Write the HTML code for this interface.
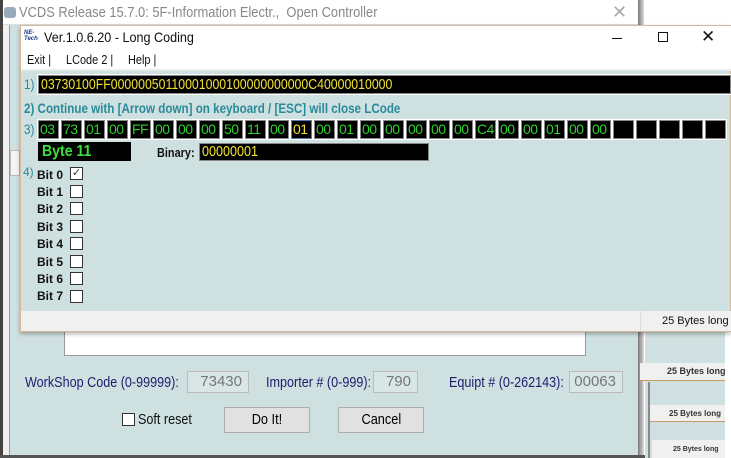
<!DOCTYPE html>
<html><head><style>
*{margin:0;padding:0;box-sizing:border-box}
body{width:731px;height:458px;overflow:hidden;background:#fff;position:relative;font-family:"Liberation Sans",sans-serif}
.a{position:absolute;white-space:nowrap}
.c{transform:scaleX(.84);transform-origin:0 0}
.box{position:absolute;top:120px;width:21px;height:19px;background:#000;border:1px solid #888;outline:1px solid #fff;color:#2ed12e;font-size:14px;line-height:17px;padding-left:1px;letter-spacing:-0.5px}
.bit{position:absolute;left:37px;font-size:12px;font-weight:bold;color:#111}
.cb{position:absolute;left:70px;width:13px;height:13px;border:1px solid #333;background:#fff}
.lbl{color:#1d1d6e;font-size:15px}
.inp{position:absolute;border:1px solid #bbb;background:#d8e6e6;color:#777;font-size:15px;text-align:right;padding-right:6px;line-height:20px;height:22px}
.btn{position:absolute;top:407px;height:26px;background:#e1e1e1;border:1px solid #adadad;font-size:15px;text-align:center;line-height:24px}
.btn span{display:inline-block;transform:scaleX(.85)}
</style></head><body>
<div class="a" style="left:0;top:0;width:3px;height:458px;background:#444"></div>
<div class="a" style="left:3px;top:0;width:635px;height:455px;background:#cfe0e0;border-left:7px solid #f0f0f0"></div>
<div class="a" style="left:9px;top:25px;width:1px;height:430px;background:#999"></div>
<div class="a" style="left:3px;top:0;width:635px;height:25px;background:#fff;border-bottom:1px solid #ddd"></div>
<div class="a" style="left:4px;top:7px;width:12px;height:11px;background:#9ab;border-radius:3px"></div>
<div class="a c" style="left:19px;top:4px;font-size:15px;color:#888;transform:scaleX(.86)">VCDS Release 15.7.0: 5F-Information Electr.,&nbsp; Open Controller</div>
<div class="a" style="left:612px;top:2px;font-size:18px;color:#aaa">✕</div>
<div class="a" style="left:638px;top:0;width:6px;height:458px;background:linear-gradient(90deg,#777,#ddd)"></div>
<div class="a" style="left:0;top:455px;width:645px;height:3px;background:#555"></div>
<div class="a" style="left:10px;top:150px;width:10px;height:26px;background:#f4f4f4;border:1px solid #bbb"></div>
<div class="a" style="left:645px;top:330px;width:86px;height:128px;background:#d0dfdf"></div>
<div class="a" style="left:640px;top:363px;width:85px;height:18px;background:#f0f0f0;border-bottom:1px solid #c96"></div>
<div class="a" style="left:667px;top:366px;font-size:9px;font-weight:bold;color:#333">25 Bytes long</div>
<div class="a" style="left:725px;top:330px;width:6px;height:128px;background:#fff"></div>
<div class="a" style="left:648px;top:382px;width:2px;height:76px;background:#888"></div>
<div class="a" style="left:650px;top:405px;width:75px;height:17px;background:#f0f0f0;border-bottom:1px solid #c96"></div>
<div class="a" style="left:669px;top:409px;font-size:8px;font-weight:bold;color:#333">25 Bytes long</div>
<div class="a" style="left:652px;top:440px;width:73px;height:18px;background:#f0f0f0"></div>
<div class="a" style="left:673px;top:446px;font-size:7px;font-weight:bold;color:#333">25 Bytes long</div>
<div class="a" style="left:64px;top:332px;width:522px;height:24px;background:#fff;border:1px solid #999;border-top:none"></div>
<div class="a lbl c" style="left:25px;top:374px">WorkShop Code (0-99999):</div>
<div class="inp" style="left:187px;top:371px;width:62px">73430</div>
<div class="a lbl c" style="left:266px;top:374px">Importer # (0-999):</div>
<div class="inp" style="left:373px;top:371px;width:45px">790</div>
<div class="a lbl c" style="left:449px;top:374px">Equipt # (0-262143):</div>
<div class="inp" style="left:569px;top:371px;width:54px">00063</div>
<div class="a" style="left:122px;top:413px;width:13px;height:13px;background:#fff;border:1px solid #333"></div>
<div class="a c" style="left:138px;top:411px;font-size:15px;color:#111">Soft reset</div>
<div class="btn" style="left:224px;width:86px"><span>Do It!</span></div>
<div class="btn" style="left:338px;width:86px"><span>Cancel</span></div>
<div class="a" style="left:20px;top:25px;width:711px;height:307px;background:#cfe0e0;border:1px solid #d8b89a;box-shadow:0 2px 4px rgba(0,0,0,.3)"></div>
<div class="a" style="left:21px;top:26px;width:710px;height:44px;background:#fff"></div>
<div class="a" style="left:24px;top:30px;font-size:6px;font-style:italic;font-weight:bold;color:#1a3a8a;line-height:6px">NE-<br>Tech</div>
<div class="a c" style="left:44px;top:29px;font-size:14px;color:#111;transform:scaleX(.9)">Ver.1.0.6.20 - Long Coding</div>
<div class="a" style="left:612px;top:38px;width:10px;height:1px;background:#111"></div>
<div class="a" style="left:658px;top:32px;width:10px;height:10px;border:1px solid #111"></div>
<div class="a" style="left:701px;top:27px;font-size:17px;color:#111">✕</div>
<div class="a c" style="left:27px;top:52px;font-size:13px;color:#111">Exit |</div>
<div class="a c" style="left:66px;top:52px;font-size:13px;color:#111">LCode 2 |</div>
<div class="a c" style="left:128px;top:52px;font-size:13px;color:#111">Help |</div>
<div class="a" style="left:21px;top:69px;width:710px;height:2px;background:#e6eeee"></div>
<div class="a c" style="left:24px;top:76px;font-size:14px;color:#2a8a9a">1)</div>
<div class="a" style="left:38px;top:75px;width:693px;height:19px;background:#000;border:1px solid #888;outline:1px solid #fff"></div>
<div class="a c" style="left:41px;top:76px;font-size:15px;color:#f2e030;transform:scaleX(.82)">03730100FF00000050110001000100000000000C40000010000</div>
<div class="a c" style="left:24px;top:100px;font-size:14px;font-weight:bold;color:#2a8a9a;transform:scaleX(.83)">2) Continue with [Arrow down] on keyboard / [ESC] will close LCode</div>
<div class="a c" style="left:24px;top:121px;font-size:14px;color:#2a8a9a">3)</div>
<div class="box" style="left:38px">03</div><div class="box" style="left:61px">73</div><div class="box" style="left:84px">01</div><div class="box" style="left:107px">00</div><div class="box" style="left:130px">FF</div><div class="box" style="left:153px">00</div><div class="box" style="left:176px">00</div><div class="box" style="left:199px">00</div><div class="box" style="left:222px">50</div><div class="box" style="left:245px">11</div><div class="box" style="left:268px">00</div><div class="box" style="left:291px;color:#f2e030;border-color:#5a7ab0">01</div><div class="box" style="left:314px">00</div><div class="box" style="left:337px">01</div><div class="box" style="left:360px">00</div><div class="box" style="left:383px">00</div><div class="box" style="left:406px">00</div><div class="box" style="left:429px">00</div><div class="box" style="left:452px">00</div><div class="box" style="left:475px">C4</div><div class="box" style="left:498px">00</div><div class="box" style="left:521px">00</div><div class="box" style="left:544px">01</div><div class="box" style="left:567px">00</div><div class="box" style="left:590px">00</div><div class="box" style="left:613px"></div><div class="box" style="left:636px"></div><div class="box" style="left:659px"></div><div class="box" style="left:682px"></div><div class="box" style="left:705px"></div>
<div class="a" style="left:38px;top:142px;width:93px;height:19px;background:#000"></div>
<div class="a c" style="left:42px;top:142px;color:#3ee03e;font-weight:bold;font-size:16px;line-height:19px;transform:scaleX(.88)">Byte 11</div>
<div class="a c" style="left:157px;top:145px;font-size:13px;font-weight:bold;color:#111">Binary:</div>
<div class="a" style="left:199px;top:143px;width:230px;height:18px;background:#000;border:1px solid #888"></div>
<div class="a c" style="left:202px;top:144px;color:#f2e030;font-size:15px;line-height:16px">00000001</div>
<div class="a" style="left:23px;top:165px;font-size:12px;color:#2a8a9a">4)</div>
<div class="bit" style="top:168px">Bit 0</div><div class="cb" style="top:167px;font-size:11px;line-height:10px;color:#333;text-align:center">✓</div>
<div class="bit" style="top:185px">Bit 1</div><div class="cb" style="top:185px"></div>
<div class="bit" style="top:202px">Bit 2</div><div class="cb" style="top:202px"></div>
<div class="bit" style="top:220px">Bit 3</div><div class="cb" style="top:220px"></div>
<div class="bit" style="top:237px">Bit 4</div><div class="cb" style="top:237px"></div>
<div class="bit" style="top:255px">Bit 5</div><div class="cb" style="top:255px"></div>
<div class="bit" style="top:272px">Bit 6</div><div class="cb" style="top:272px"></div>
<div class="bit" style="top:289px">Bit 7</div><div class="cb" style="top:290px"></div>
<div class="a" style="left:21px;top:311px;width:710px;height:20px;background:#f0f0f0"></div>
<div class="a" style="left:640px;top:311px;width:1px;height:20px;background:#ddd"></div>
<div class="a" style="left:662px;top:315px;font-size:11px;color:#111">25 Bytes long</div>
</body></html>
